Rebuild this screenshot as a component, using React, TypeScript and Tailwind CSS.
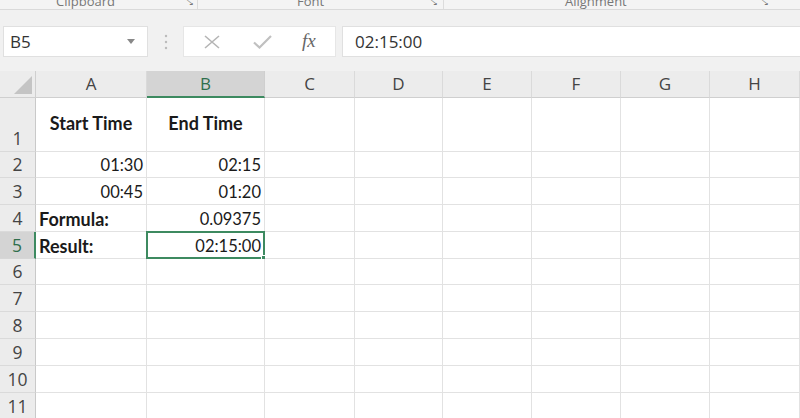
const cols = ["A", "B", "C", "D", "E", "F", "G", "H"];
const rowHeights = ["h-[54px]", "h-[26px]", "h-[27px]", "h-[27px]", "h-[27px]", "h-[26px]", "h-[27px]", "h-[27px]", "h-[27px]", "h-[27px]", "h-[27px]"];

type Cell = { text: string; align: "left" | "right" | "center"; bold?: boolean };

const data: Record<string, Cell> = {
  "1A": { text: "Start Time", align: "center", bold: true },
  "1B": { text: "End Time", align: "center", bold: true },
  "2A": { text: "01:30", align: "right" },
  "2B": { text: "02:15", align: "right" },
  "3A": { text: "00:45", align: "right" },
  "3B": { text: "01:20", align: "right" },
  "4A": { text: "Formula:", align: "left", bold: true },
  "4B": { text: "0.09375", align: "right" },
  "5A": { text: "Result:", align: "left", bold: true },
  "5B": { text: "02:15:00", align: "right" },
};

const alignClass = {
  left: "justify-start pl-[3px]",
  right: "justify-end pr-[3px]",
  center: "justify-center",
};

const Ribbon = () => (
  <div className="h-[10px] overflow-hidden flex items-end border-b border-[#dadada] bg-[#f4f4f4] text-[13px] leading-[16px] text-[#777]">
    <div className="w-[197px] flex items-end">
      <span className="ml-[56px]">Clipboard</span>
      <span className="ml-auto mr-[4px] text-[10px]">⤡</span>
    </div>
    <div className="w-px h-[10px] bg-[#dcdcdc]" />
    <div className="w-[245px] flex items-end">
      <span className="ml-[99px]">Font</span>
      <span className="ml-auto mr-[6px] text-[10px]">⤡</span>
    </div>
    <div className="w-px h-[10px] bg-[#dcdcdc]" />
    <div className="flex-1 flex items-end">
      <span className="ml-[121px]">Alignment</span>
      <span className="ml-auto mr-[32px] text-[10px]">⤡</span>
    </div>
  </div>
);

const FormulaBar = () => (
  <div className="flex items-stretch h-[31px] mt-[16px] text-[17px] text-[#333]">
    <div className="ml-[3px] w-[145px] bg-white border border-[#e0e0e0] flex items-center pl-[6px] pr-[12px]">
      <span>B5</span>
      <svg className="ml-auto" width="8" height="5" viewBox="0 0 8 5">
        <path d="M0 0h8L4 5z" fill="#888" />
      </svg>
    </div>
    <div className="w-[35px] flex items-center justify-center">
      <svg width="4" height="16" viewBox="0 0 4 16">
        <circle cx="2" cy="2" r="1.2" fill="#bbb" />
        <circle cx="2" cy="8" r="1.2" fill="#bbb" />
        <circle cx="2" cy="14" r="1.2" fill="#bbb" />
      </svg>
    </div>
    <div className="w-[153px] bg-white border border-[#e6e6e6] flex items-center">
      <svg className="ml-[20px]" width="16" height="14" viewBox="0 0 16 14">
        <path d="M1 1L15 13M15 1L1 13" stroke="#b5b5b5" strokeWidth="1.6" fill="none" />
      </svg>
      <svg className="ml-[33px]" width="19" height="14" viewBox="0 0 19 14">
        <path d="M1 7.5L6.5 12.5L18 1" stroke="#c0c0c0" strokeWidth="2.2" fill="none" />
      </svg>
      <span className="ml-[30px] italic text-[19px] text-[#666]" style={{ fontFamily: '"Liberation Serif", serif' }}>
        fx
      </span>
    </div>
    <div className="ml-[6px] flex-1 bg-white border-l border-y border-[#e0e0e0] flex items-center pl-[12px]">
      02:15:00
    </div>
  </div>
);

const Grid = () => (
  <div className="mt-[14px] grid grid-cols-[36px_111px_118px_90px_88px_89px_89px_89px_90px]">
    <div className="h-[27px] bg-[#ececec] border-r border-b border-[#cfcfcf] flex items-end justify-end pr-[3px] pb-[3px]">
      <svg width="18" height="18" viewBox="0 0 18 18">
        <path d="M18 0V18H0z" fill="#c4c4c4" />
      </svg>
    </div>
    {cols.map((c) => (
      <div
        key={c}
        className={`h-[27px] flex items-center justify-center text-[17px] border-r ${
          c === "B"
            ? "bg-[#d4d4d4] border-b-2 border-b-[#3d8a60] border-r-[#cfcfcf] text-[#2f6e4c]"
            : "bg-[#ececec] border-b border-b-[#cfcfcf] border-r-[#dadada] text-[#444]"
        }`}
      >
        {c}
      </div>
    ))}
    {rowHeights.map((h, i) => {
      const r = i + 1;
      return [
        <div
          key={`h${r}`}
          className={`${h} flex items-end justify-center pb-[2px] text-[17.5px] leading-[22px] border-b ${
            r === 5
              ? "bg-[#d4d4d4] border-r-2 border-r-[#3d8a60] border-b-[#d6d6d6] text-[#2f6e4c]"
              : "bg-[#ececec] border-r border-r-[#c9c9c9] border-b-[#dadada] text-[#444]"
          }`}
        >
          {r}
        </div>,
        ...cols.map((c) => {
          const cell = data[`${r}${c}`];
          const selected = r === 5 && c === "B";
          return (
            <div
              key={`${r}${c}`}
              className={`${h} relative bg-white border-r border-b border-[#e2e2e2] flex ${
                r === 1 ? "items-start pt-[14px]" : "items-end pb-[1px]"
              } ${cell ? alignClass[cell.align] : ""} leading-[22px] text-[#1a1a1a]`}
              style={{ fontFamily: "Lato, sans-serif" }}
            >
              {cell && (
                <span className={cell.bold ? "font-bold text-[18px]" : "text-[16.5px]"}>{cell.text}</span>
              )}
              {selected && (
                <>
                  <div className="absolute -left-[1px] -top-[1px] right-[-1px] bottom-[-1px] border-2 border-[#3d8a60]" />
                  <div className="absolute -right-[4px] -bottom-[4px] w-[7px] h-[7px] bg-[#3d8a60] border border-white" />
                </>
              )}
            </div>
          );
        }),
      ];
    })}
  </div>
);

export default function App() {
  return (
    <div
      className="w-[800px] h-[418px] overflow-hidden bg-[#f1f1f1]"
      style={{ fontFamily: '"Open Sans", "Noto Sans", sans-serif' }}
    >
      <Ribbon />
      <FormulaBar />
      <Grid />
    </div>
  );
}
